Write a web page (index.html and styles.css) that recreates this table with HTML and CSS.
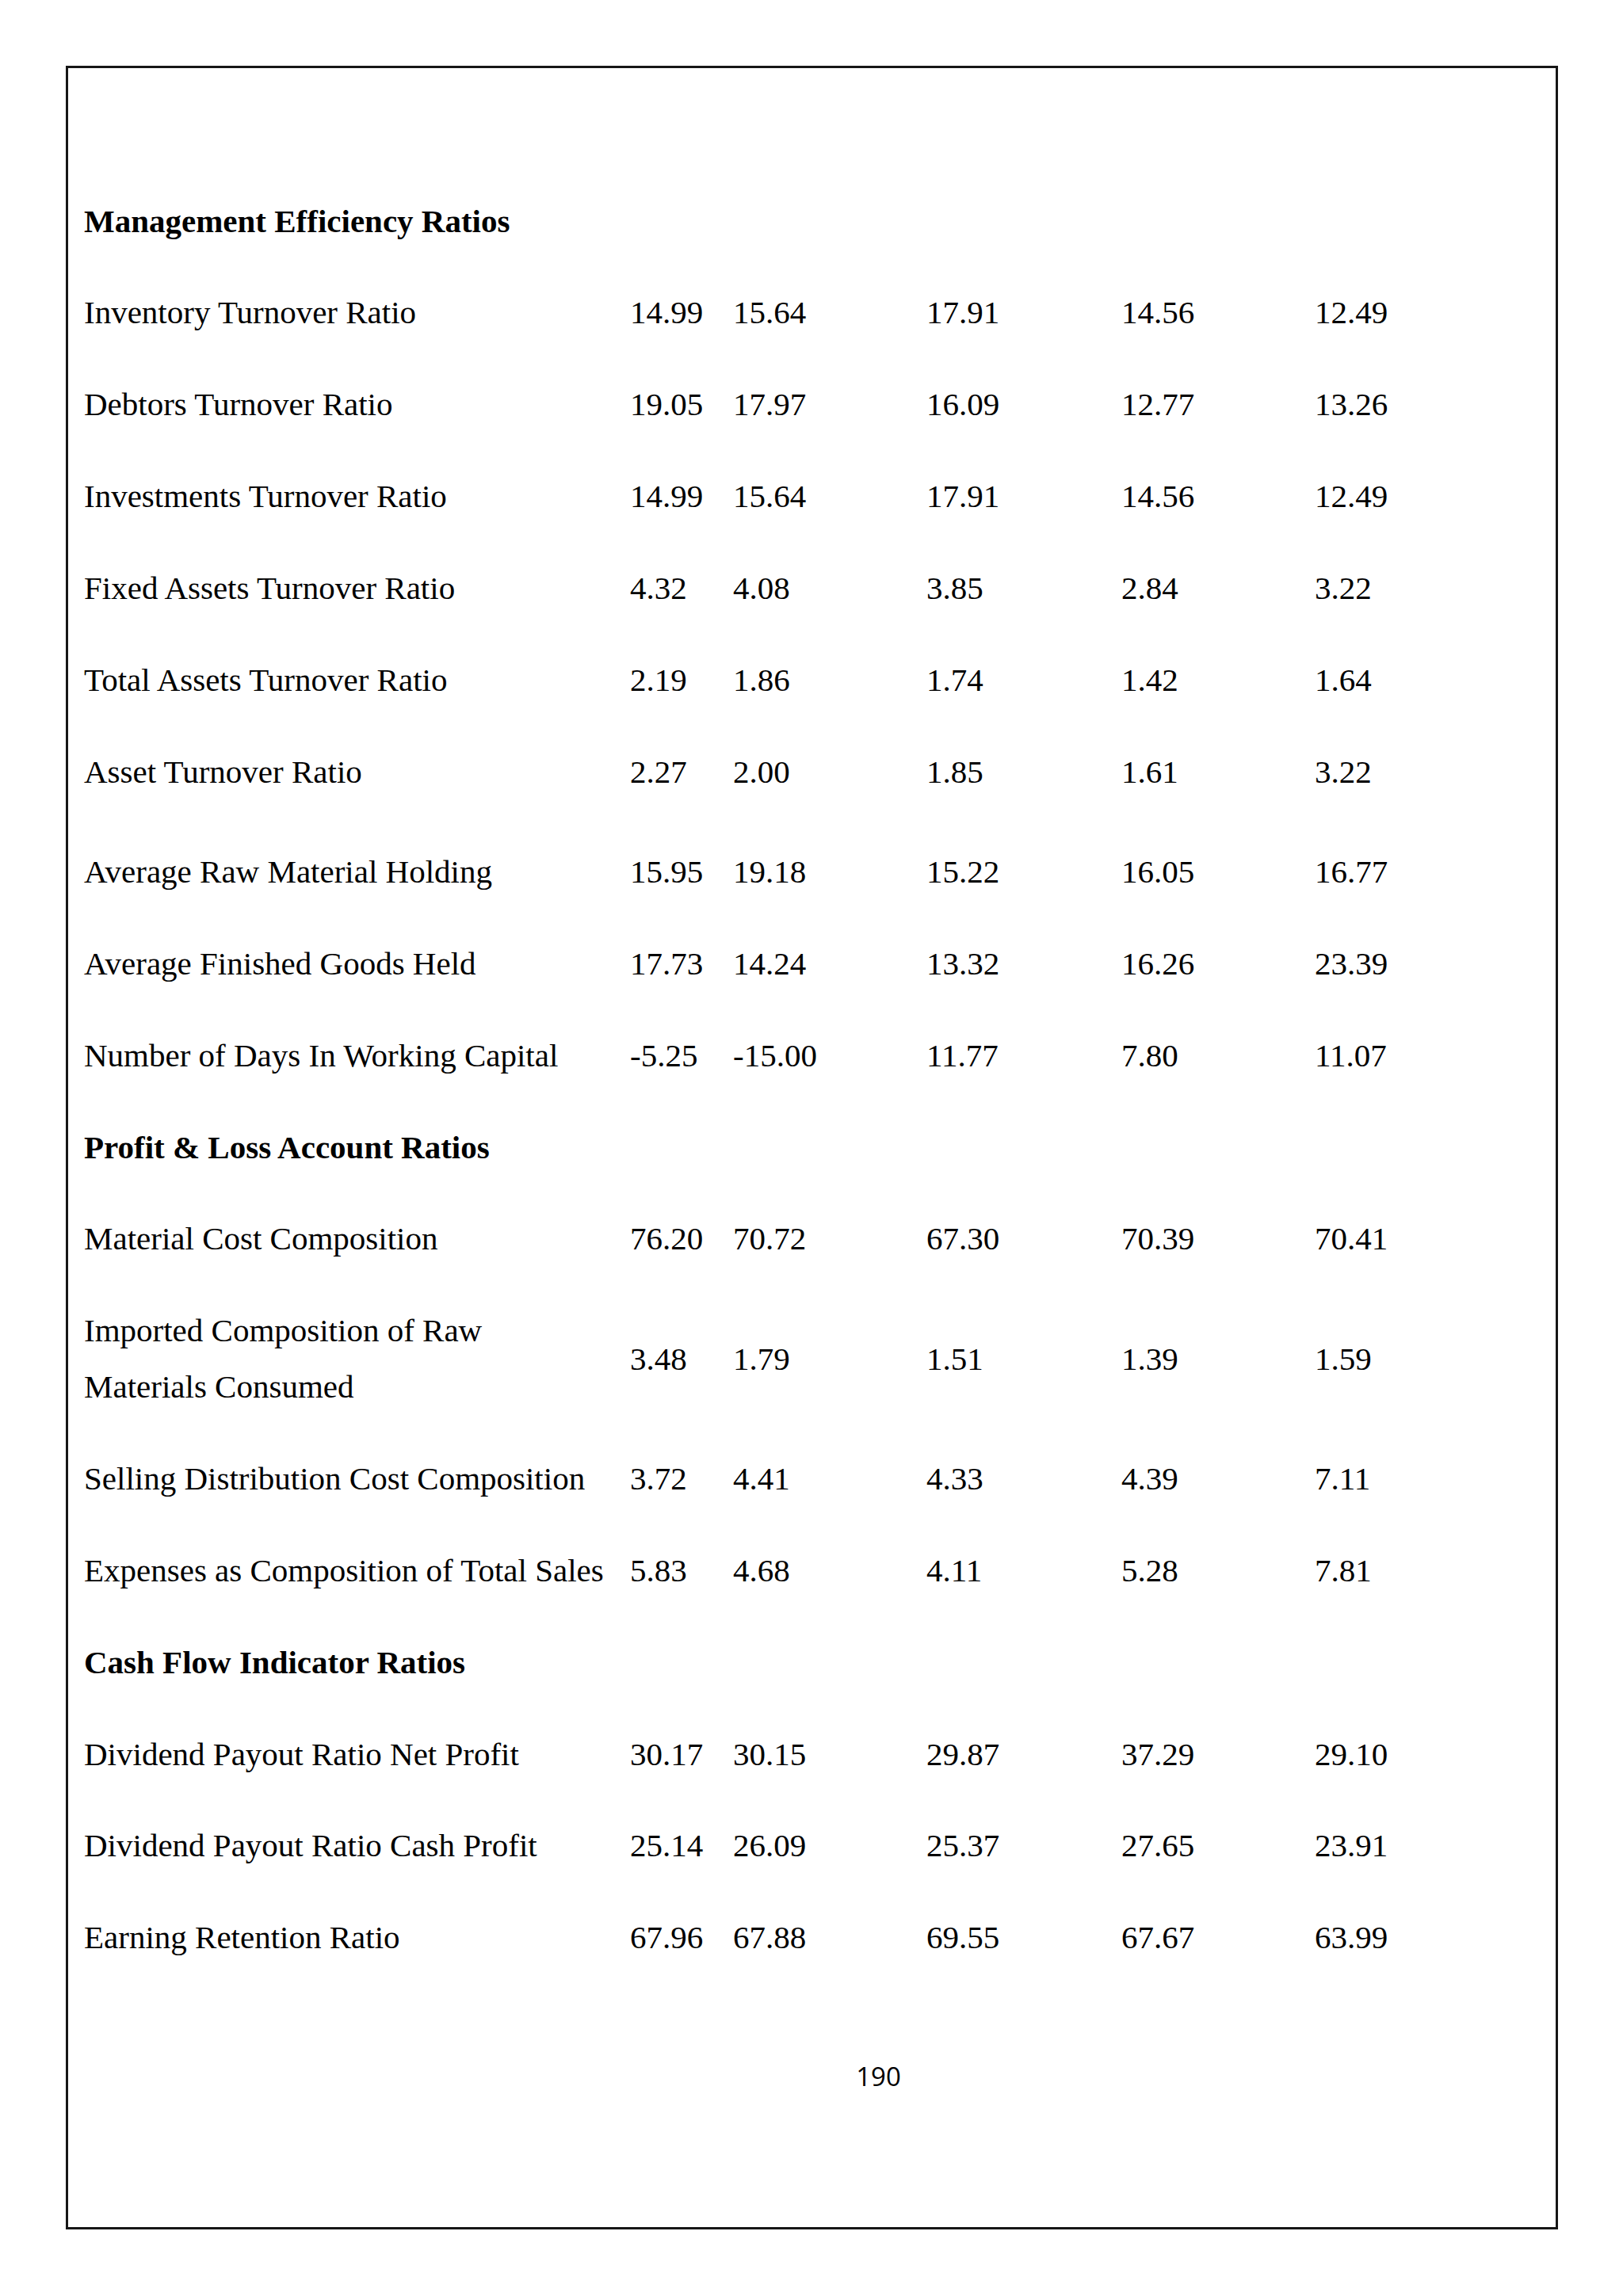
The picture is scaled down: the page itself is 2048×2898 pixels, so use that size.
FILE: index.html
```html
<!DOCTYPE html>
<html lang="en">
<head>
<meta charset="utf-8">
<title>Ratios - 190</title>
<link rel="stylesheet" href="styles.css">
</head>
<body>
<div class="page">
  <div class="table">
    <div class="row head"><div class="label">Management Efficiency Ratios</div></div>
    <div class="row"><div class="label">Inventory Turnover Ratio</div><div class="num">14.99</div><div class="num">15.64</div><div class="num">17.91</div><div class="num">14.56</div><div class="num">12.49</div></div>
    <div class="row"><div class="label">Debtors Turnover Ratio</div><div class="num">19.05</div><div class="num">17.97</div><div class="num">16.09</div><div class="num">12.77</div><div class="num">13.26</div></div>
    <div class="row"><div class="label">Investments Turnover Ratio</div><div class="num">14.99</div><div class="num">15.64</div><div class="num">17.91</div><div class="num">14.56</div><div class="num">12.49</div></div>
    <div class="row"><div class="label">Fixed Assets Turnover Ratio</div><div class="num">4.32</div><div class="num">4.08</div><div class="num">3.85</div><div class="num">2.84</div><div class="num">3.22</div></div>
    <div class="row"><div class="label">Total Assets Turnover Ratio</div><div class="num">2.19</div><div class="num">1.86</div><div class="num">1.74</div><div class="num">1.42</div><div class="num">1.64</div></div>
    <div class="row"><div class="label">Asset Turnover Ratio</div><div class="num">2.27</div><div class="num">2.00</div><div class="num">1.85</div><div class="num">1.61</div><div class="num">3.22</div></div>
    <div class="row gap"><div class="label">Average Raw Material Holding</div><div class="num">15.95</div><div class="num">19.18</div><div class="num">15.22</div><div class="num">16.05</div><div class="num">16.77</div></div>
    <div class="row"><div class="label">Average Finished Goods Held</div><div class="num">17.73</div><div class="num">14.24</div><div class="num">13.32</div><div class="num">16.26</div><div class="num">23.39</div></div>
    <div class="row"><div class="label">Number of Days In Working Capital</div><div class="num">-5.25</div><div class="num">-15.00</div><div class="num">11.77</div><div class="num">7.80</div><div class="num">11.07</div></div>
    <div class="row head"><div class="label">Profit &amp; Loss Account Ratios</div></div>
    <div class="row"><div class="label">Material Cost Composition</div><div class="num">76.20</div><div class="num">70.72</div><div class="num">67.30</div><div class="num">70.39</div><div class="num">70.41</div></div>
    <div class="row"><div class="label">Imported Composition of Raw<br>Materials Consumed</div><div class="num">3.48</div><div class="num">1.79</div><div class="num">1.51</div><div class="num">1.39</div><div class="num">1.59</div></div>
    <div class="row"><div class="label">Selling Distribution Cost Composition</div><div class="num">3.72</div><div class="num">4.41</div><div class="num">4.33</div><div class="num">4.39</div><div class="num">7.11</div></div>
    <div class="row"><div class="label">Expenses as Composition of Total Sales</div><div class="num">5.83</div><div class="num">4.68</div><div class="num">4.11</div><div class="num">5.28</div><div class="num">7.81</div></div>
    <div class="row head"><div class="label">Cash Flow Indicator Ratios</div></div>
    <div class="row"><div class="label">Dividend Payout Ratio Net Profit</div><div class="num">30.17</div><div class="num">30.15</div><div class="num">29.87</div><div class="num">37.29</div><div class="num">29.10</div></div>
    <div class="row"><div class="label">Dividend Payout Ratio Cash Profit</div><div class="num">25.14</div><div class="num">26.09</div><div class="num">25.37</div><div class="num">27.65</div><div class="num">23.91</div></div>
    <div class="row"><div class="label">Earning Retention Ratio</div><div class="num">67.96</div><div class="num">67.88</div><div class="num">69.55</div><div class="num">67.67</div><div class="num">63.99</div></div>
  </div>
  <div class="footer">190</div>
</div>
</body>
</html>
```

FILE: styles.css
```css
html, body {
  margin: 0;
  padding: 0;
  background: #ffffff;
}

body {
  width: 2048px;
  min-height: 2898px;
  color: #000000;
  font-family: "Liberation Serif", "Times New Roman", serif;
}

.page {
  box-sizing: border-box;
  margin: 83px 0 0 83px;
  width: 1883px;
  height: 2731px;
  border: 3px solid #161616;
  padding: 135px 0 0 20px;
}

.table {
  display: flex;
  flex-direction: column;
}

.row {
  display: grid;
  grid-template-columns: 689px 130px 244px 246px 244px 1fr;
  align-items: center;
  padding: 22.6px 0;
  font-size: 41px;
  line-height: 70.7px;
}

.row.gap {
  padding-top: 32.6px;
}

.row.head .label {
  font-weight: bold;
  grid-column: 1 / -1;
}

.label {
  white-space: nowrap;
}

.num {
  white-space: nowrap;
}

.footer {
  margin-top: 94px;
  padding-left: 148px;
  text-align: center;
  font-family: "Open Sans", "Liberation Sans", sans-serif;
  font-size: 33px;
  line-height: 45px;
}
```
